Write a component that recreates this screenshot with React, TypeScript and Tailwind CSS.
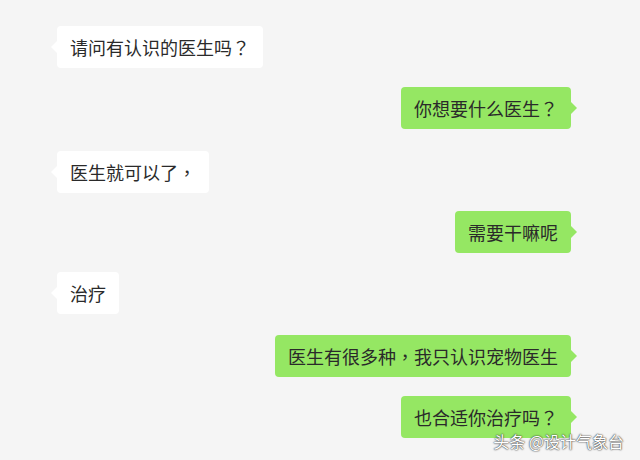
const messages = [
  { side: "left", text: "请问有认识的医生吗？", mt: "mt-[26px]" },
  { side: "right", text: "你想要什么医生？", mt: "mt-[19px]" },
  { side: "left", text: "医生就可以了，", mt: "mt-[22px]" },
  { side: "right", text: "需要干嘛呢", mt: "mt-[18px]" },
  { side: "left", text: "治疗", mt: "mt-[19px]" },
  { side: "right", text: "医生有很多种，我只认识宠物医生", mt: "mt-[21px]" },
  { side: "right", text: "也合适你治疗吗？", mt: "mt-[19px]" },
];

// full-width punctuation sits centred in its box in the reference
function Text({ text }: { text: string }) {
  return (
    <span>
      {text.split(/([，？])/).map((part, i) =>
        part === "，" || part === "？" ? (
          <span key={i} className="font-['Noto_Sans_CJK_TC',sans-serif]">
            {part}
          </span>
        ) : (
          part
        )
      )}
    </span>
  );
}

function Bubble({ side, text }: { side: string; text: string }) {
  const left = side === "left";
  return (
    <div
      className={`relative h-[42px] px-[13px] flex items-center rounded-[4px] text-[18px] leading-none text-[#2a2a2a] ${
        left ? "bg-white" : "bg-[#95e763]"
      }`}
    >
      {left ? (
        <span className="absolute left-[-6px] top-1/2 -translate-y-1/2 w-0 h-0 border-y-[6px] border-y-transparent border-r-[6px] border-r-white" />
      ) : (
        <span className="absolute right-[-6px] top-1/2 -translate-y-1/2 w-0 h-0 border-y-[6px] border-y-transparent border-l-[6px] border-l-[#95e763]" />
      )}
      <Text text={text} />
    </div>
  );
}

export default function App() {
  return (
    <div className="relative w-[640px] h-[460px] overflow-hidden bg-[#f5f5f5] font-['Noto_Sans_CJK_SC','Microsoft_YaHei',sans-serif]">
      <div className="flex flex-col pl-[57px] pr-[69px]">
        {messages.map((m, i) => (
          <div key={i} className={`flex ${m.side === "left" ? "justify-start" : "justify-end"} ${m.mt}`}>
            <Bubble side={m.side} text={m.text} />
          </div>
        ))}
      </div>
      <div className="absolute right-[16px] bottom-[11px] text-[16px] leading-none text-white [text-shadow:0_0_2px_#333,0_0_1px_#333]">
        头条 @设计气象台
      </div>
    </div>
  );
}
